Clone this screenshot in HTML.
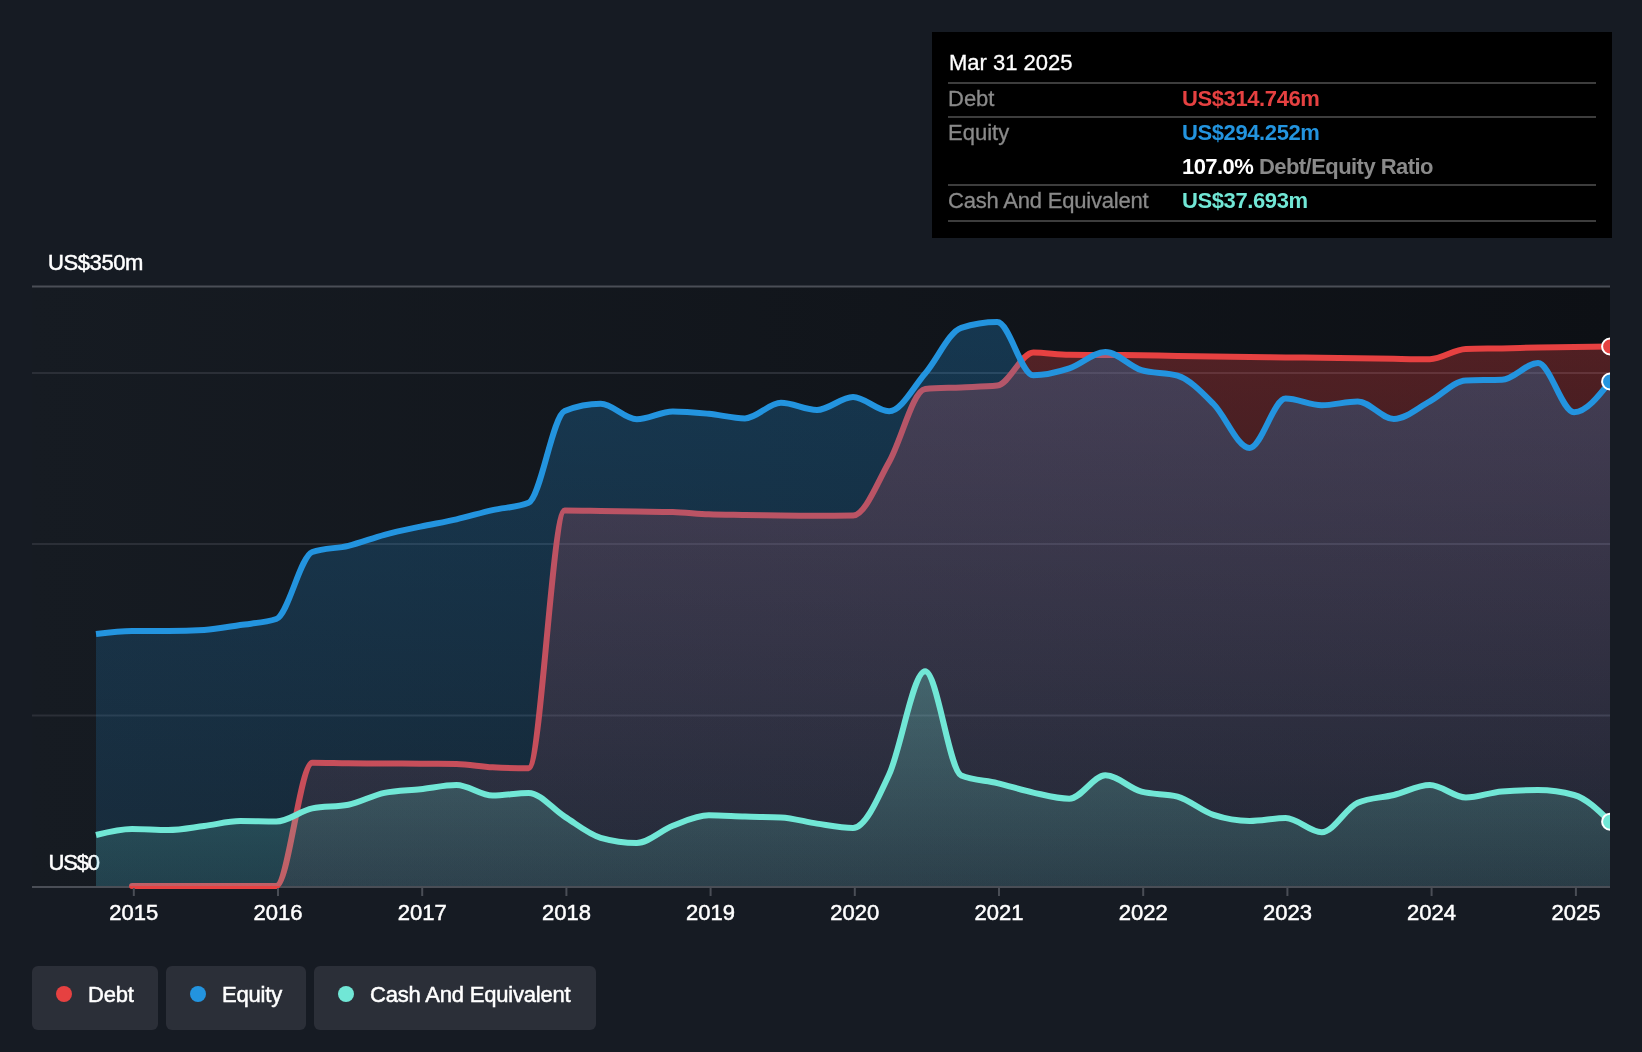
<!DOCTYPE html>
<html><head><meta charset="utf-8">
<style>
html,body{margin:0;padding:0;background:#161b23;width:1642px;height:1052px;overflow:hidden;font-family:"Liberation Sans",sans-serif;}
svg{position:absolute;left:0;top:0;will-change:transform;}
.tt,.legend{will-change:transform;}
.tt{position:absolute;left:932px;top:32px;width:680px;height:206px;background:#000;}
.tt .t{position:absolute;font-size:22px;white-space:nowrap;line-height:1;}
.sep{position:absolute;left:16px;width:648px;height:2px;background:#3d3d3d;}
.legend{position:absolute;top:966px;height:64px;background:#2b2f38;border-radius:6px;}
.legend .dot{position:absolute;left:24px;top:20px;width:16px;height:16px;border-radius:50%;}
.legend .lt{position:absolute;left:56px;top:18px;font-size:22px;-webkit-text-stroke:0.5px #fff;letter-spacing:-0.2px;color:#fff;line-height:1;white-space:nowrap;}
</style></head><body>
<svg width="1642" height="1052" viewBox="0 0 1642 1052">
<defs>
<linearGradient id="bgg" x1="0" y1="0" x2="1" y2="0">
<stop offset="0" stop-color="#161b22"/><stop offset="1" stop-color="#0d1015"/>
</linearGradient>
<linearGradient id="gd" gradientUnits="userSpaceOnUse" x1="0" y1="346" x2="0" y2="886">
<stop offset="0" stop-color="#e64141" stop-opacity="0.31"/><stop offset="1" stop-color="#e64141" stop-opacity="0.08"/>
</linearGradient>
<linearGradient id="ge" gradientUnits="userSpaceOnUse" x1="0" y1="322" x2="0" y2="886">
<stop offset="0" stop-color="#2394df" stop-opacity="0.27"/><stop offset="1" stop-color="#2394df" stop-opacity="0.13"/>
</linearGradient>
<linearGradient id="gc" gradientUnits="userSpaceOnUse" x1="0" y1="671" x2="0" y2="886">
<stop offset="0" stop-color="#71e7d6" stop-opacity="0.28"/><stop offset="1" stop-color="#71e7d6" stop-opacity="0.12"/>
</linearGradient>
<clipPath id="clip"><rect x="32" y="200" width="1578" height="697"/></clipPath>
</defs>
<rect x="32" y="287" width="1578" height="599" fill="url(#bgg)"/>
<text x="48" y="269.8" font-size="22" fill="#fff" font-family="Liberation Sans" stroke="#fff" stroke-width="0.5" letter-spacing="-0.4">US$350m</text>
<text x="48.5" y="870" font-size="22" fill="#fff" font-family="Liberation Sans" stroke="#fff" stroke-width="0.5" letter-spacing="-1.2">US$0</text>
<line x1="32" y1="286.5" x2="1610" y2="286.5" stroke="#4a4e56" stroke-width="2"/>
<line x1="32" y1="373" x2="1610" y2="373" stroke="#2b2f37" stroke-width="2"/>
<line x1="32" y1="544" x2="1610" y2="544" stroke="#2b2f37" stroke-width="2"/>
<line x1="32" y1="715.4" x2="1610" y2="715.4" stroke="#2b2f37" stroke-width="2"/>
<line x1="32" y1="887" x2="1610" y2="887" stroke="#4a4e56" stroke-width="2"/>
<g clip-path="url(#clip)">
<path d="M132.05,886.00 C144.07,886.00 156.08,886.00 168.10,886.00 C180.12,886.00 192.13,886.00 204.15,886.00 C216.17,886.00 228.18,886.00 240.20,886.00 C252.22,886.00 264.23,886.00 276.25,886.00 C288.27,886.00 300.28,762.70 312.30,762.70 C324.32,762.70 336.33,763.17 348.35,763.30 C360.37,763.43 372.38,763.43 384.40,763.50 C396.42,763.57 408.43,763.62 420.45,763.70 C432.47,763.78 444.48,763.80 456.50,764.00 C468.52,764.20 480.53,766.70 492.55,767.30 C504.57,767.90 516.58,768.20 528.60,768.20 C540.62,768.20 552.63,510.60 564.65,510.60 C576.67,510.60 588.68,510.85 600.70,511.00 C612.72,511.15 624.73,511.33 636.75,511.50 C648.77,511.67 660.78,511.67 672.80,512.00 C684.82,512.33 696.83,513.83 708.85,514.30 C720.87,514.77 732.88,514.78 744.90,515.00 C756.92,515.22 768.93,515.47 780.95,515.60 C792.97,515.73 804.98,515.80 817.00,515.80 C829.02,515.80 841.03,515.73 853.05,515.60 C865.07,515.47 877.08,483.10 889.10,462.00 C901.12,440.90 913.13,390.07 925.15,389.00 C937.17,387.93 949.18,387.97 961.20,387.40 C973.22,386.83 985.23,386.80 997.25,385.60 C1009.27,384.40 1021.28,352.50 1033.30,352.50 C1045.32,352.50 1057.33,354.67 1069.35,354.80 C1081.37,354.93 1093.38,354.92 1105.40,355.00 C1117.42,355.08 1129.43,355.13 1141.45,355.30 C1153.47,355.47 1165.48,355.80 1177.50,356.00 C1189.52,356.20 1201.53,356.33 1213.55,356.50 C1225.57,356.67 1237.58,356.83 1249.60,357.00 C1261.62,357.17 1273.63,357.38 1285.65,357.50 C1297.67,357.62 1309.68,357.58 1321.70,357.70 C1333.72,357.82 1345.73,358.02 1357.75,358.20 C1369.77,358.38 1381.78,358.63 1393.80,358.80 C1405.82,358.97 1417.83,359.20 1429.85,359.20 C1441.87,359.20 1453.88,349.40 1465.90,349.00 C1477.92,348.60 1489.93,348.65 1501.95,348.40 C1513.97,348.15 1525.98,347.75 1538.00,347.50 C1550.02,347.25 1562.03,347.07 1574.05,346.90 C1586.07,346.73 1598.08,346.62 1610.10,346.50 L1610.10,886 L132.05,886 Z" fill="url(#gd)"/>
<path d="M132.05,886.00 C144.07,886.00 156.08,886.00 168.10,886.00 C180.12,886.00 192.13,886.00 204.15,886.00 C216.17,886.00 228.18,886.00 240.20,886.00 C252.22,886.00 264.23,886.00 276.25,886.00 C288.27,886.00 300.28,762.70 312.30,762.70 C324.32,762.70 336.33,763.17 348.35,763.30 C360.37,763.43 372.38,763.43 384.40,763.50 C396.42,763.57 408.43,763.62 420.45,763.70 C432.47,763.78 444.48,763.80 456.50,764.00 C468.52,764.20 480.53,766.70 492.55,767.30 C504.57,767.90 516.58,768.20 528.60,768.20 C540.62,768.20 552.63,510.60 564.65,510.60 C576.67,510.60 588.68,510.85 600.70,511.00 C612.72,511.15 624.73,511.33 636.75,511.50 C648.77,511.67 660.78,511.67 672.80,512.00 C684.82,512.33 696.83,513.83 708.85,514.30 C720.87,514.77 732.88,514.78 744.90,515.00 C756.92,515.22 768.93,515.47 780.95,515.60 C792.97,515.73 804.98,515.80 817.00,515.80 C829.02,515.80 841.03,515.73 853.05,515.60 C865.07,515.47 877.08,483.10 889.10,462.00 C901.12,440.90 913.13,390.07 925.15,389.00 C937.17,387.93 949.18,387.97 961.20,387.40 C973.22,386.83 985.23,386.80 997.25,385.60 C1009.27,384.40 1021.28,352.50 1033.30,352.50 C1045.32,352.50 1057.33,354.67 1069.35,354.80 C1081.37,354.93 1093.38,354.92 1105.40,355.00 C1117.42,355.08 1129.43,355.13 1141.45,355.30 C1153.47,355.47 1165.48,355.80 1177.50,356.00 C1189.52,356.20 1201.53,356.33 1213.55,356.50 C1225.57,356.67 1237.58,356.83 1249.60,357.00 C1261.62,357.17 1273.63,357.38 1285.65,357.50 C1297.67,357.62 1309.68,357.58 1321.70,357.70 C1333.72,357.82 1345.73,358.02 1357.75,358.20 C1369.77,358.38 1381.78,358.63 1393.80,358.80 C1405.82,358.97 1417.83,359.20 1429.85,359.20 C1441.87,359.20 1453.88,349.40 1465.90,349.00 C1477.92,348.60 1489.93,348.65 1501.95,348.40 C1513.97,348.15 1525.98,347.75 1538.00,347.50 C1550.02,347.25 1562.03,347.07 1574.05,346.90 C1586.07,346.73 1598.08,346.62 1610.10,346.50" fill="none" stroke="#e64141" stroke-width="6" stroke-linecap="round" stroke-linejoin="round"/>
<path d="M96.00,634.00 C108.02,632.50 120.03,631.00 132.05,631.00 C144.07,631.00 156.08,631.00 168.10,631.00 C180.12,631.00 192.13,630.67 204.15,630.00 C216.17,629.33 228.18,626.83 240.20,625.00 C252.22,623.17 264.23,623.00 276.25,619.00 C288.27,615.00 300.28,556.13 312.30,552.00 C324.32,547.87 336.33,548.67 348.35,545.80 C360.37,542.93 372.38,538.00 384.40,534.80 C396.42,531.60 408.43,529.18 420.45,526.60 C432.47,524.02 444.48,522.05 456.50,519.30 C468.52,516.55 480.53,512.85 492.55,510.10 C504.57,507.35 516.58,507.67 528.60,502.80 C540.62,497.93 552.63,415.80 564.65,411.00 C576.67,406.20 588.68,403.80 600.70,403.80 C612.72,403.80 624.73,419.30 636.75,419.30 C648.77,419.30 660.78,411.40 672.80,411.40 C684.82,411.40 696.83,412.63 708.85,413.80 C720.87,414.97 732.88,418.40 744.90,418.40 C756.92,418.40 768.93,402.80 780.95,402.80 C792.97,402.80 804.98,410.00 817.00,410.00 C829.02,410.00 841.03,397.00 853.05,397.00 C865.07,397.00 877.08,411.30 889.10,411.30 C901.12,411.30 913.13,387.42 925.15,373.50 C937.17,359.58 949.18,331.67 961.20,327.80 C973.22,323.93 985.23,322.00 997.25,322.00 C1009.27,322.00 1021.28,375.30 1033.30,375.30 C1045.32,375.30 1057.33,372.28 1069.35,368.40 C1081.37,364.52 1093.38,352.00 1105.40,352.00 C1117.42,352.00 1129.43,366.53 1141.45,370.20 C1153.47,373.87 1165.48,372.03 1177.50,375.70 C1189.52,379.37 1201.53,391.97 1213.55,404.00 C1225.57,416.03 1237.58,447.90 1249.60,447.90 C1261.62,447.90 1273.63,398.60 1285.65,398.60 C1297.67,398.60 1309.68,405.30 1321.70,405.30 C1333.72,405.30 1345.73,401.40 1357.75,401.40 C1369.77,401.40 1381.78,419.00 1393.80,419.00 C1405.82,419.00 1417.83,407.83 1429.85,401.40 C1441.87,394.97 1453.88,380.80 1465.90,380.40 C1477.92,380.00 1489.93,380.20 1501.95,379.80 C1513.97,379.40 1525.98,363.10 1538.00,363.10 C1550.02,363.10 1562.03,412.20 1574.05,412.20 C1586.07,412.20 1598.08,396.85 1610.10,381.50 L1610.10,886 L96.00,886 Z" fill="url(#ge)"/>
<path d="M96.00,634.00 C108.02,632.50 120.03,631.00 132.05,631.00 C144.07,631.00 156.08,631.00 168.10,631.00 C180.12,631.00 192.13,630.67 204.15,630.00 C216.17,629.33 228.18,626.83 240.20,625.00 C252.22,623.17 264.23,623.00 276.25,619.00 C288.27,615.00 300.28,556.13 312.30,552.00 C324.32,547.87 336.33,548.67 348.35,545.80 C360.37,542.93 372.38,538.00 384.40,534.80 C396.42,531.60 408.43,529.18 420.45,526.60 C432.47,524.02 444.48,522.05 456.50,519.30 C468.52,516.55 480.53,512.85 492.55,510.10 C504.57,507.35 516.58,507.67 528.60,502.80 C540.62,497.93 552.63,415.80 564.65,411.00 C576.67,406.20 588.68,403.80 600.70,403.80 C612.72,403.80 624.73,419.30 636.75,419.30 C648.77,419.30 660.78,411.40 672.80,411.40 C684.82,411.40 696.83,412.63 708.85,413.80 C720.87,414.97 732.88,418.40 744.90,418.40 C756.92,418.40 768.93,402.80 780.95,402.80 C792.97,402.80 804.98,410.00 817.00,410.00 C829.02,410.00 841.03,397.00 853.05,397.00 C865.07,397.00 877.08,411.30 889.10,411.30 C901.12,411.30 913.13,387.42 925.15,373.50 C937.17,359.58 949.18,331.67 961.20,327.80 C973.22,323.93 985.23,322.00 997.25,322.00 C1009.27,322.00 1021.28,375.30 1033.30,375.30 C1045.32,375.30 1057.33,372.28 1069.35,368.40 C1081.37,364.52 1093.38,352.00 1105.40,352.00 C1117.42,352.00 1129.43,366.53 1141.45,370.20 C1153.47,373.87 1165.48,372.03 1177.50,375.70 C1189.52,379.37 1201.53,391.97 1213.55,404.00 C1225.57,416.03 1237.58,447.90 1249.60,447.90 C1261.62,447.90 1273.63,398.60 1285.65,398.60 C1297.67,398.60 1309.68,405.30 1321.70,405.30 C1333.72,405.30 1345.73,401.40 1357.75,401.40 C1369.77,401.40 1381.78,419.00 1393.80,419.00 C1405.82,419.00 1417.83,407.83 1429.85,401.40 C1441.87,394.97 1453.88,380.80 1465.90,380.40 C1477.92,380.00 1489.93,380.20 1501.95,379.80 C1513.97,379.40 1525.98,363.10 1538.00,363.10 C1550.02,363.10 1562.03,412.20 1574.05,412.20 C1586.07,412.20 1598.08,396.85 1610.10,381.50" fill="none" stroke="#2394df" stroke-width="6" stroke-linejoin="round"/>
<path d="M96.00,835.00 C108.02,832.00 120.03,829.00 132.05,829.00 C144.07,829.00 156.08,830.00 168.10,830.00 C180.12,830.00 192.13,827.50 204.15,826.00 C216.17,824.50 228.18,821.00 240.20,821.00 C252.22,821.00 264.23,821.50 276.25,821.50 C288.27,821.50 300.28,810.80 312.30,808.40 C324.32,806.00 336.33,807.20 348.35,804.80 C360.37,802.40 372.38,795.37 384.40,792.90 C396.42,790.43 408.43,790.52 420.45,789.20 C432.47,787.88 444.48,785.00 456.50,785.00 C468.52,785.00 480.53,795.60 492.55,795.60 C504.57,795.60 516.58,792.90 528.60,792.90 C540.62,792.90 552.63,809.12 564.65,816.60 C576.67,824.08 588.68,834.40 600.70,837.80 C612.72,841.20 624.73,842.90 636.75,842.90 C648.77,842.90 660.78,830.40 672.80,825.80 C684.82,821.20 696.83,815.30 708.85,815.30 C720.87,815.30 732.88,816.25 744.90,816.60 C756.92,816.95 768.93,816.87 780.95,817.40 C792.97,817.93 804.98,821.83 817.00,823.60 C829.02,825.37 841.03,828.00 853.05,828.00 C865.07,828.00 877.08,800.62 889.10,774.50 C901.12,748.38 913.13,671.30 925.15,671.30 C937.17,671.30 949.18,770.43 961.20,775.50 C973.22,780.57 985.23,780.25 997.25,783.10 C1009.27,785.95 1021.28,790.00 1033.30,792.60 C1045.32,795.20 1057.33,798.70 1069.35,798.70 C1081.37,798.70 1093.38,775.30 1105.40,775.30 C1117.42,775.30 1129.43,788.43 1141.45,791.70 C1153.47,794.97 1165.48,793.33 1177.50,796.60 C1189.52,799.87 1201.53,810.90 1213.55,814.90 C1225.57,818.90 1237.58,820.90 1249.60,820.90 C1261.62,820.90 1273.63,818.00 1285.65,818.00 C1297.67,818.00 1309.68,832.20 1321.70,832.20 C1333.72,832.20 1345.73,807.83 1357.75,802.70 C1369.77,797.57 1381.78,797.95 1393.80,795.00 C1405.82,792.05 1417.83,785.00 1429.85,785.00 C1441.87,785.00 1453.88,797.50 1465.90,797.50 C1477.92,797.50 1489.93,792.27 1501.95,791.40 C1513.97,790.53 1525.98,790.10 1538.00,790.10 C1550.02,790.10 1562.03,791.73 1574.05,795.00 C1586.07,798.27 1598.08,809.98 1610.10,821.70 L1610.10,886 L96.00,886 Z" fill="url(#gc)"/>
<path d="M96.00,835.00 C108.02,832.00 120.03,829.00 132.05,829.00 C144.07,829.00 156.08,830.00 168.10,830.00 C180.12,830.00 192.13,827.50 204.15,826.00 C216.17,824.50 228.18,821.00 240.20,821.00 C252.22,821.00 264.23,821.50 276.25,821.50 C288.27,821.50 300.28,810.80 312.30,808.40 C324.32,806.00 336.33,807.20 348.35,804.80 C360.37,802.40 372.38,795.37 384.40,792.90 C396.42,790.43 408.43,790.52 420.45,789.20 C432.47,787.88 444.48,785.00 456.50,785.00 C468.52,785.00 480.53,795.60 492.55,795.60 C504.57,795.60 516.58,792.90 528.60,792.90 C540.62,792.90 552.63,809.12 564.65,816.60 C576.67,824.08 588.68,834.40 600.70,837.80 C612.72,841.20 624.73,842.90 636.75,842.90 C648.77,842.90 660.78,830.40 672.80,825.80 C684.82,821.20 696.83,815.30 708.85,815.30 C720.87,815.30 732.88,816.25 744.90,816.60 C756.92,816.95 768.93,816.87 780.95,817.40 C792.97,817.93 804.98,821.83 817.00,823.60 C829.02,825.37 841.03,828.00 853.05,828.00 C865.07,828.00 877.08,800.62 889.10,774.50 C901.12,748.38 913.13,671.30 925.15,671.30 C937.17,671.30 949.18,770.43 961.20,775.50 C973.22,780.57 985.23,780.25 997.25,783.10 C1009.27,785.95 1021.28,790.00 1033.30,792.60 C1045.32,795.20 1057.33,798.70 1069.35,798.70 C1081.37,798.70 1093.38,775.30 1105.40,775.30 C1117.42,775.30 1129.43,788.43 1141.45,791.70 C1153.47,794.97 1165.48,793.33 1177.50,796.60 C1189.52,799.87 1201.53,810.90 1213.55,814.90 C1225.57,818.90 1237.58,820.90 1249.60,820.90 C1261.62,820.90 1273.63,818.00 1285.65,818.00 C1297.67,818.00 1309.68,832.20 1321.70,832.20 C1333.72,832.20 1345.73,807.83 1357.75,802.70 C1369.77,797.57 1381.78,797.95 1393.80,795.00 C1405.82,792.05 1417.83,785.00 1429.85,785.00 C1441.87,785.00 1453.88,797.50 1465.90,797.50 C1477.92,797.50 1489.93,792.27 1501.95,791.40 C1513.97,790.53 1525.98,790.10 1538.00,790.10 C1550.02,790.10 1562.03,791.73 1574.05,795.00 C1586.07,798.27 1598.08,809.98 1610.10,821.70" fill="none" stroke="#71e7d6" stroke-width="6" stroke-linejoin="round"/>
<circle cx="1610.10" cy="346.50" r="8" fill="#e64141" stroke="#fff" stroke-width="2"/>
<circle cx="1610.10" cy="381.50" r="8" fill="#2394df" stroke="#fff" stroke-width="2"/>
<circle cx="1610.10" cy="821.70" r="8" fill="#71e7d6" stroke="#fff" stroke-width="2"/>
</g>
<g stroke="#4a4e56" stroke-width="2">
<line x1="133.8" y1="888" x2="133.8" y2="896"/><line x1="278" y1="888" x2="278" y2="896"/><line x1="422.2" y1="888" x2="422.2" y2="896"/><line x1="566.4" y1="888" x2="566.4" y2="896"/><line x1="710.6" y1="888" x2="710.6" y2="896"/><line x1="854.8" y1="888" x2="854.8" y2="896"/><line x1="999" y1="888" x2="999" y2="896"/><line x1="1143.2" y1="888" x2="1143.2" y2="896"/><line x1="1287.4" y1="888" x2="1287.4" y2="896"/><line x1="1431.6" y1="888" x2="1431.6" y2="896"/><line x1="1575.9" y1="888" x2="1575.9" y2="896"/>
</g>
<g font-size="22" fill="#fff" stroke="#fff" stroke-width="0.5" text-anchor="middle" font-family="Liberation Sans">
<text x="133.8" y="920">2015</text><text x="278" y="920">2016</text><text x="422.2" y="920">2017</text><text x="566.4" y="920">2018</text><text x="710.6" y="920">2019</text><text x="854.8" y="920">2020</text><text x="999" y="920">2021</text><text x="1143.2" y="920">2022</text><text x="1287.4" y="920">2023</text><text x="1431.6" y="920">2024</text><text x="1575.9" y="920">2025</text>
</g>
</svg>
<div class="tt">
<div class="t" style="left:17px;top:20.1px;color:#fff;-webkit-text-stroke:0.3px #fff;">Mar 31 2025</div>
<div class="sep" style="top:50px"></div>
<div class="t" style="left:16px;top:56.1px;color:#8a8a8a;-webkit-text-stroke:0.3px #8a8a8a;">Debt</div>
<div class="t" style="left:250px;top:56.1px;color:#e64141;font-weight:bold;letter-spacing:-0.4px;">US$314.746m</div>
<div class="sep" style="top:84px"></div>
<div class="t" style="left:16px;top:90.1px;color:#8a8a8a;-webkit-text-stroke:0.3px #8a8a8a;">Equity</div>
<div class="t" style="left:250px;top:90.1px;color:#2394df;font-weight:bold;letter-spacing:-0.4px;">US$294.252m</div>
<div class="t" style="left:250px;top:124.1px;color:#fff;font-weight:bold;letter-spacing:-0.55px;">107.0% <span style="color:#8a8a8a">Debt/Equity Ratio</span></div>
<div class="sep" style="top:152px"></div>
<div class="t" style="left:16px;top:158.1px;color:#8a8a8a;-webkit-text-stroke:0.3px #8a8a8a;letter-spacing:-0.2px;">Cash And Equivalent</div>
<div class="t" style="left:250px;top:158.1px;color:#71e7d6;font-weight:bold;letter-spacing:-0.4px;">US$37.693m</div>
<div class="sep" style="top:188px"></div>
</div>
<div class="legend" style="left:32px;width:126px;"><div class="dot" style="background:#e64141"></div><div class="lt">Debt</div></div>
<div class="legend" style="left:166px;width:140px;"><div class="dot" style="background:#2394df"></div><div class="lt">Equity</div></div>
<div class="legend" style="left:314px;width:282px;"><div class="dot" style="background:#71e7d6"></div><div class="lt">Cash And Equivalent</div></div>
</body></html>
